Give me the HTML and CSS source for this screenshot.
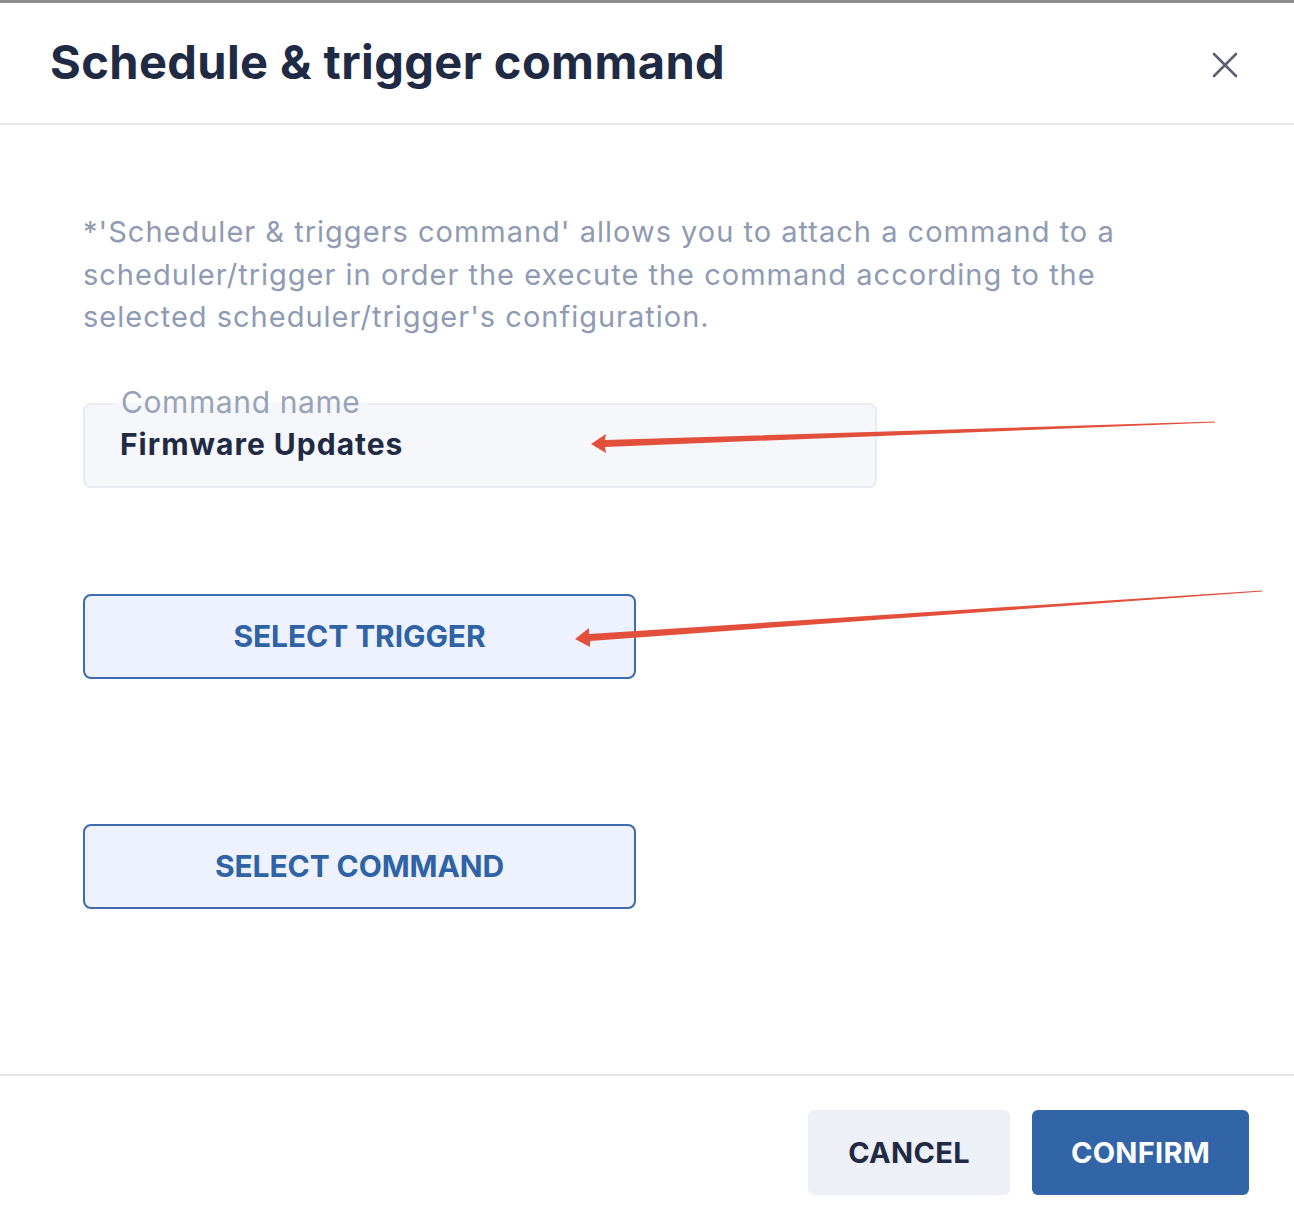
FILE: index.html
```html
<!DOCTYPE html>
<html>
<head>
<meta charset="utf-8">
<link rel="stylesheet" href="styles.css">
</head>
<body>
<div class="dialog">
  <header class="head">
    <h1 class="title">Schedule &amp; trigger command</h1>
    <button class="close" aria-label="Close">
      <svg width="26" height="26" viewBox="0 0 26 26"><path d="M2 2 L24 24 M24 2 L2 24" stroke="#5b6170" stroke-width="2.6" stroke-linecap="round"/></svg>
    </button>
  </header>
  <main class="body">
    <p class="desc">*'Scheduler &amp; triggers command' allows you to attach a command to a scheduler/trigger in order the execute the command according to the selected scheduler/trigger's configuration.</p>
    <div class="field">
      <span class="label">Command name</span>
      <span class="value">Firmware Updates</span>
    </div>
    <button class="select first">SELECT TRIGGER</button>
    <button class="select second">SELECT COMMAND</button>
  </main>
  <footer class="foot">
    <button class="btn cancel">CANCEL</button>
    <button class="btn confirm">CONFIRM</button>
  </footer>
  <svg class="arrows" width="1294" height="1221" viewBox="0 0 1294 1221">
    <polygon points="1215,421.5 605,440 606,434 591,444 606,453 605,447 1215,422.5" fill="#e2503c"/>
    <polygon points="1262,590.5 589,634 589,628 575,639 590,647 590,641 1262,591.5" fill="#e2503c"/>
  </svg>
</div>
</body>
</html>
```
FILE: styles.css
```css
* { box-sizing: border-box; }
html, body { margin: 0; padding: 0; background: #fff; }
body { font-family: "Inter", "Liberation Sans", sans-serif; }
.dialog {
  position: relative;
  width: 1294px;
  height: 1221px;
  border-top: 3px solid #8a8c90;
  display: flex;
  flex-direction: column;
}
.head {
  height: 122px;
  border-bottom: 2px solid #e6e7ea;
  display: flex;
  align-items: center;
  justify-content: space-between;
  padding: 0 56px 0 50px;
}
.title {
  margin: 0;
  margin-top: -3px;
  font-size: 47px;
  font-weight: 700;
  color: #1f2a44;
  letter-spacing: 0.4px;
}
.close {
  border: 0; background: none; padding: 0; width: 26px; height: 26px; cursor: pointer;
  margin-top: 4px;
}
.body {
  flex: 1;
  padding: 86px 0 0 83px;
  border-bottom: 2px solid #e6e7ea;
}
.desc {
  margin: 0;
  width: 1140px;
  font-size: 29px;
  line-height: 42.5px;
  color: #8e9bb2;
  letter-spacing: 1px;
}
.field {
  position: relative;
  margin-top: 64px;
  width: 794px;
  height: 85px;
  background: #f5f7fb;
  border: 2px solid #e8ebf2;
  border-radius: 8px;
  padding: 18px 0 0 35px;
}
.label {
  position: absolute;
  top: -21px;
  left: 28px;
  padding: 0 8px;
  background: linear-gradient(#fff 50%, #f5f7fb 50%);
  font-size: 30px;
  line-height: 36px;
  color: #98a3b8;
  letter-spacing: 0.6px;
}
.value {
  display: block;
  font-size: 30px;
  line-height: 42px;
  font-weight: 700;
  color: #1f2a44;
  letter-spacing: 1px;
}
.select {
  display: block;
  width: 553px;
  height: 85px;
  background: #edf2fe;
  border: 2px solid #3d6bae;
  border-radius: 8px;
  font-family: inherit;
  font-size: 30px;
  font-weight: 700;
  color: #2f63a6;
  letter-spacing: -0.1px;
}
.select.first { margin-top: 106px; }
.select.second { margin-top: 145px; }
.foot {
  height: 145px;
  display: flex;
  justify-content: flex-end;
  align-items: flex-start;
  gap: 22px;
  padding: 34px 45px 0 0;
}
.btn {
  height: 85px;
  border: 0;
  border-radius: 6px;
  font-family: inherit;
  font-size: 29px;
  font-weight: 700;
  letter-spacing: 0.3px;
}
.cancel { width: 202px; background: #edf0f6; color: #1f2a44; }
.confirm { width: 217px; background: #3265a8; color: #fff; }
.arrows { position: absolute; left: 0; top: -3px; pointer-events: none; }
```
